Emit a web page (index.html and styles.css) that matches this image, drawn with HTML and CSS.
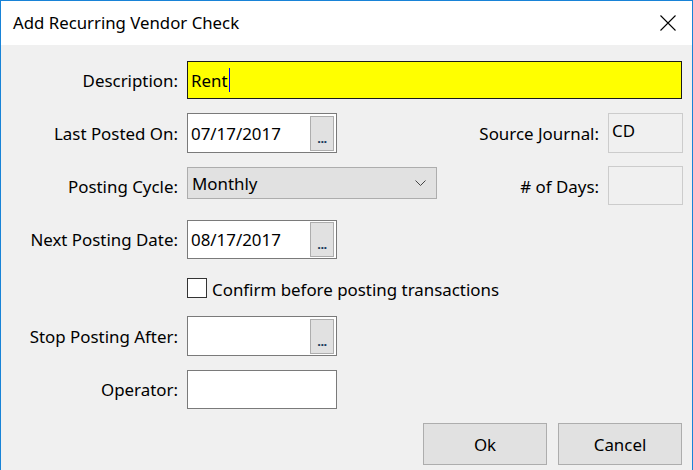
FILE: index.html
```html
<!DOCTYPE html>
<html>
<head>
<meta charset="utf-8">
<link rel="stylesheet" href="styles.css">
</head>
<body>
<div class="window">
  <div class="titlebar">
    <span class="title">Add Recurring Vendor Check</span>
    <svg class="close" width="16" height="16" viewBox="0 0 16 16"><path d="M0.5 0.5 L15.5 15.5 M15.5 0.5 L0.5 15.5" stroke="#000" stroke-width="1.1" fill="none"/></svg>
  </div>
  <div class="content">
    <div class="row r-desc">
      <label class="lbl">Description:</label>
      <div class="input desc"><span class="val">Rent</span><span class="caret"></span></div>
    </div>
    <div class="row r-last">
      <label class="lbl">Last Posted On:</label>
      <div class="input date"><span class="val">07/17/2017</span><span class="dots">...</span></div>
      <span class="spacer"></span>
      <label class="lbl rlbl">Source Journal:</label>
      <div class="ro"><span class="val">CD</span></div>
    </div>
    <div class="row r-cycle">
      <label class="lbl">Posting Cycle:</label>
      <div class="select"><span class="val">Monthly</span>
        <svg class="chev" width="11" height="6" viewBox="0 0 11 6"><path d="M0.5 0.5 L5.5 5.5 L10.5 0.5" stroke="#444" stroke-width="1" fill="none"/></svg>
      </div>
      <span class="spacer"></span>
      <label class="lbl rlbl">#&nbsp;of Days:</label>
      <div class="ro"></div>
    </div>
    <div class="row r-next">
      <label class="lbl">Next Posting Date:</label>
      <div class="input date"><span class="val">08/17/2017</span><span class="dots">...</span></div>
    </div>
    <div class="row r-check">
      <span class="lblspace"></span>
      <span class="checkbox"></span>
      <span class="checktext">Confirm before posting transactions</span>
    </div>
    <div class="row r-stop">
      <label class="lbl">Stop Posting After:</label>
      <div class="input date"><span class="val"></span><span class="dots">...</span></div>
    </div>
    <div class="row r-op">
      <label class="lbl">Operator:</label>
      <div class="input date"></div>
    </div>
    <div class="buttons">
      <button class="btn">Ok</button>
      <button class="btn">Cancel</button>
    </div>
  </div>
</div>
</body>
</html>
```
FILE: styles.css
```css
* { box-sizing: border-box; }
html, body { margin: 0; padding: 0; }
body {
  width: 693px;
  height: 470px;
  overflow: hidden;
  font-family: "Noto Sans", "Open Sans", sans-serif;
  color: #000;
  background: #f0f0f0;
}
.window {
  width: 693px;
  height: 470px;
  border: 1px solid #1883d7;
  border-bottom: none;
  display: flex;
  flex-direction: column;
  background: #f0f0f0;
}
.titlebar {
  height: 44px;
  background: #fff;
  display: flex;
  align-items: center;
  padding-left: 12px;
  padding-right: 16px;
  flex-shrink: 0;
}
.title {
  font-size: 16.8px;
  flex: 1;
  margin-top: -1px;
}
.close { display: block; margin-top: 0; }
.content {
  flex: 1;
  padding-top: 16px;
  padding-right: 10px;
}
.row {
  display: flex;
  align-items: center;
  font-size: 16.9px;
}
.lbl {
  width: 177px;
  text-align: right;
  white-space: nowrap;
  margin-right: 9px;
  flex-shrink: 0;
}
.rlbl { width: auto; }
.lblspace { width: 186px; flex-shrink: 0; }
.spacer { flex: 1; }
.input {
  background: #fff;
  border: 1px solid #7a7a7a;
  display: flex;
  align-items: center;
  padding-left: 3px;
  position: relative;
}
.desc {
  width: 495px;
  height: 38px;
  background: #ffff00;
  border-color: #1a1a1a;
  padding-left: 3px;
}
.caret {
  display: inline-block;
  width: 1px;
  height: 24px;
  background: #0000ff;
  margin-left: 1px;
}
.date {
  width: 150px;
  height: 40px;
}
.r-op .date { height: 39px; }
.r-next .date { height: 39px; }
.val { white-space: nowrap; }
.date .val { flex: 1; }
.dots {
  width: 24px;
  height: 35px;
  margin-right: 2px;
  background: #e1e1e1;
  border: 1px solid #adadad;
  font-size: 13px;
  font-weight: bold;
  display: flex;
  align-items: flex-end;
  justify-content: center;
  padding-bottom: 5px;
  line-height: 1;
  letter-spacing: -0.5px;
  color: #1a3a5a;
}
.r-desc { height: 38px; }
.r-last { margin-top: 14px; height: 40px; }
.r-cycle { margin-top: 13px; height: 39px; }
.r-next { margin-top: 15px; height: 39px; }
.r-check { margin-top: 19px; height: 20px; }
.r-check .checktext { margin-top: 2px; }
.r-stop { margin-top: 18px; height: 40px; }
.r-op { margin-top: 14px; height: 39px; }
.r-cycle .lbl { margin-top: 1px; }
.ro {
  width: 75px;
  height: 40px;
  border: 1px solid #cccccc;
  background: #f0f0f0;
  padding: 5px 0 0 3px;
  font-size: 16.9px;
  margin-right: -1px;
}
.r-cycle .ro { height: 39px; }
.r-last .ro { align-self: flex-start; }
.select {
  width: 250px;
  height: 32px;
  align-self: flex-start;
  margin-top: 1px;
  background: #e1e1e1;
  border: 1px solid #adadad;
  display: flex;
  align-items: center;
  padding-left: 4px;
  padding-right: 10px;
}
.select .val { flex: 1; }
.chev { display: block; }
.checkbox {
  width: 20px;
  height: 20px;
  background: #fff;
  border: 1px solid #333;
  flex-shrink: 0;
}
.checktext { margin-left: 5px; white-space: nowrap; }
.buttons {
  display: flex;
  justify-content: flex-end;
  gap: 11px;
  margin-top: 14px;
}
.btn {
  width: 124px;
  height: 42px;
  background: #e1e1e1;
  border: 1px solid #adadad;
  font-family: "Noto Sans", "Open Sans", sans-serif;
  font-size: 16.9px;
  color: #000;
  padding: 0;
}
```
